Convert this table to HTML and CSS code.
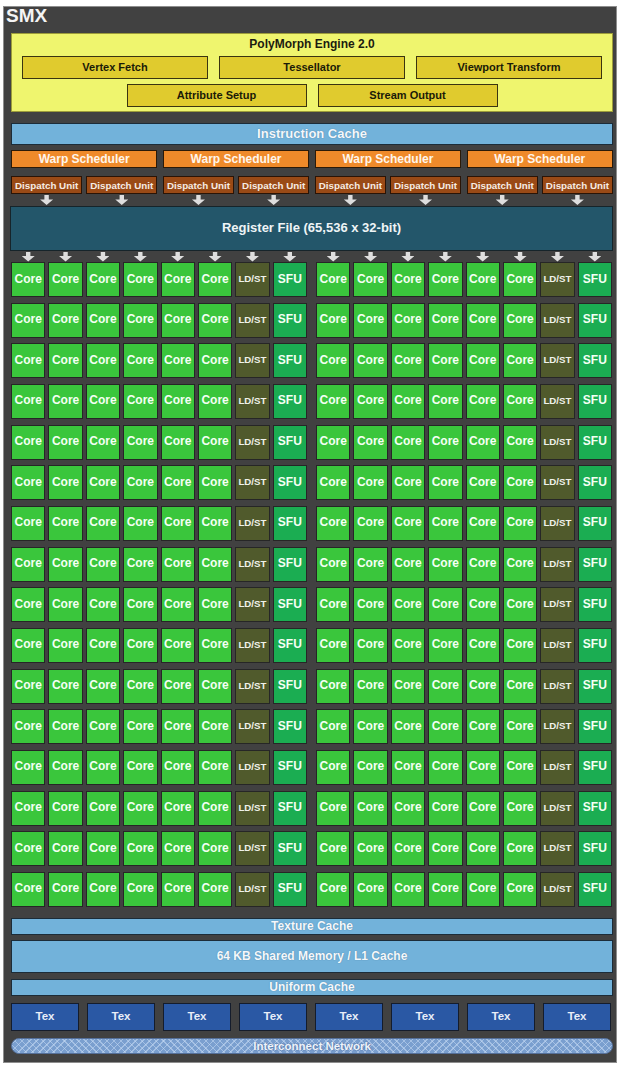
FILE: index.html
```html
<!DOCTYPE html>
<html lang="en">
<head>
<meta charset="utf-8">
<title>SMX</title>
<link rel="stylesheet" href="styles.css">
</head>
<body>
<div class="smx">
  <div class="title">SMX</div>

  <div class="poly">
    <div class="poly-title">PolyMorph Engine 2.0</div>
    <div class="poly-row3">
      <div class="ybox">Vertex Fetch</div>
      <div class="ybox">Tessellator</div>
      <div class="ybox">Viewport Transform</div>
    </div>
    <div class="poly-row2">
      <div class="ybox">Attribute Setup</div>
      <div class="ybox">Stream Output</div>
    </div>
  </div>

  <div class="cache icache">Instruction Cache</div>

  <div class="warps">
    <div class="warp">Warp Scheduler</div>
    <div class="warp">Warp Scheduler</div>
    <div class="warp">Warp Scheduler</div>
    <div class="warp">Warp Scheduler</div>
  </div>

  <div class="dispatches">
    <div class="dgroup"><div class="disp">Dispatch Unit</div><div class="disp">Dispatch Unit</div></div>
    <div class="dgroup"><div class="disp">Dispatch Unit</div><div class="disp">Dispatch Unit</div></div>
    <div class="dgroup"><div class="disp">Dispatch Unit</div><div class="disp">Dispatch Unit</div></div>
    <div class="dgroup"><div class="disp">Dispatch Unit</div><div class="disp">Dispatch Unit</div></div>
  </div>

  <div class="darrows">
    <div class="dgroup"><div class="aslot"><div class="arrow"></div></div><div class="aslot"><div class="arrow"></div></div></div>
    <div class="dgroup"><div class="aslot"><div class="arrow"></div></div><div class="aslot"><div class="arrow"></div></div></div>
    <div class="dgroup"><div class="aslot"><div class="arrow"></div></div><div class="aslot"><div class="arrow"></div></div></div>
    <div class="dgroup"><div class="aslot"><div class="arrow"></div></div><div class="aslot"><div class="arrow"></div></div></div>
  </div>

  <div class="regfile">Register File (65,536 x 32-bit)</div>

  <div class="rarrows">
    <div class="half8">
      <div class="aslot"><div class="arrow"></div></div><div class="aslot"><div class="arrow"></div></div><div class="aslot"><div class="arrow"></div></div><div class="aslot"><div class="arrow"></div></div>
      <div class="aslot"><div class="arrow"></div></div><div class="aslot"><div class="arrow"></div></div><div class="aslot"><div class="arrow"></div></div><div class="aslot"><div class="arrow"></div></div>
    </div>
    <div class="half8">
      <div class="aslot"><div class="arrow"></div></div><div class="aslot"><div class="arrow"></div></div><div class="aslot"><div class="arrow"></div></div><div class="aslot"><div class="arrow"></div></div>
      <div class="aslot"><div class="arrow"></div></div><div class="aslot"><div class="arrow"></div></div><div class="aslot"><div class="arrow"></div></div><div class="aslot"><div class="arrow"></div></div>
    </div>
  </div>

  <div class="cores">
    <div class="half8 grid">
      <div class="core">Core</div><div class="core">Core</div><div class="core">Core</div><div class="core">Core</div><div class="core">Core</div><div class="core">Core</div><div class="ldst">LD/ST</div><div class="sfu">SFU</div>
      <div class="core">Core</div><div class="core">Core</div><div class="core">Core</div><div class="core">Core</div><div class="core">Core</div><div class="core">Core</div><div class="ldst">LD/ST</div><div class="sfu">SFU</div>
      <div class="core">Core</div><div class="core">Core</div><div class="core">Core</div><div class="core">Core</div><div class="core">Core</div><div class="core">Core</div><div class="ldst">LD/ST</div><div class="sfu">SFU</div>
      <div class="core">Core</div><div class="core">Core</div><div class="core">Core</div><div class="core">Core</div><div class="core">Core</div><div class="core">Core</div><div class="ldst">LD/ST</div><div class="sfu">SFU</div>
      <div class="core">Core</div><div class="core">Core</div><div class="core">Core</div><div class="core">Core</div><div class="core">Core</div><div class="core">Core</div><div class="ldst">LD/ST</div><div class="sfu">SFU</div>
      <div class="core">Core</div><div class="core">Core</div><div class="core">Core</div><div class="core">Core</div><div class="core">Core</div><div class="core">Core</div><div class="ldst">LD/ST</div><div class="sfu">SFU</div>
      <div class="core">Core</div><div class="core">Core</div><div class="core">Core</div><div class="core">Core</div><div class="core">Core</div><div class="core">Core</div><div class="ldst">LD/ST</div><div class="sfu">SFU</div>
      <div class="core">Core</div><div class="core">Core</div><div class="core">Core</div><div class="core">Core</div><div class="core">Core</div><div class="core">Core</div><div class="ldst">LD/ST</div><div class="sfu">SFU</div>
      <div class="core">Core</div><div class="core">Core</div><div class="core">Core</div><div class="core">Core</div><div class="core">Core</div><div class="core">Core</div><div class="ldst">LD/ST</div><div class="sfu">SFU</div>
      <div class="core">Core</div><div class="core">Core</div><div class="core">Core</div><div class="core">Core</div><div class="core">Core</div><div class="core">Core</div><div class="ldst">LD/ST</div><div class="sfu">SFU</div>
      <div class="core">Core</div><div class="core">Core</div><div class="core">Core</div><div class="core">Core</div><div class="core">Core</div><div class="core">Core</div><div class="ldst">LD/ST</div><div class="sfu">SFU</div>
      <div class="core">Core</div><div class="core">Core</div><div class="core">Core</div><div class="core">Core</div><div class="core">Core</div><div class="core">Core</div><div class="ldst">LD/ST</div><div class="sfu">SFU</div>
      <div class="core">Core</div><div class="core">Core</div><div class="core">Core</div><div class="core">Core</div><div class="core">Core</div><div class="core">Core</div><div class="ldst">LD/ST</div><div class="sfu">SFU</div>
      <div class="core">Core</div><div class="core">Core</div><div class="core">Core</div><div class="core">Core</div><div class="core">Core</div><div class="core">Core</div><div class="ldst">LD/ST</div><div class="sfu">SFU</div>
      <div class="core">Core</div><div class="core">Core</div><div class="core">Core</div><div class="core">Core</div><div class="core">Core</div><div class="core">Core</div><div class="ldst">LD/ST</div><div class="sfu">SFU</div>
      <div class="core">Core</div><div class="core">Core</div><div class="core">Core</div><div class="core">Core</div><div class="core">Core</div><div class="core">Core</div><div class="ldst">LD/ST</div><div class="sfu">SFU</div>
    </div>
    <div class="half8 grid">
      <div class="core">Core</div><div class="core">Core</div><div class="core">Core</div><div class="core">Core</div><div class="core">Core</div><div class="core">Core</div><div class="ldst">LD/ST</div><div class="sfu">SFU</div>
      <div class="core">Core</div><div class="core">Core</div><div class="core">Core</div><div class="core">Core</div><div class="core">Core</div><div class="core">Core</div><div class="ldst">LD/ST</div><div class="sfu">SFU</div>
      <div class="core">Core</div><div class="core">Core</div><div class="core">Core</div><div class="core">Core</div><div class="core">Core</div><div class="core">Core</div><div class="ldst">LD/ST</div><div class="sfu">SFU</div>
      <div class="core">Core</div><div class="core">Core</div><div class="core">Core</div><div class="core">Core</div><div class="core">Core</div><div class="core">Core</div><div class="ldst">LD/ST</div><div class="sfu">SFU</div>
      <div class="core">Core</div><div class="core">Core</div><div class="core">Core</div><div class="core">Core</div><div class="core">Core</div><div class="core">Core</div><div class="ldst">LD/ST</div><div class="sfu">SFU</div>
      <div class="core">Core</div><div class="core">Core</div><div class="core">Core</div><div class="core">Core</div><div class="core">Core</div><div class="core">Core</div><div class="ldst">LD/ST</div><div class="sfu">SFU</div>
      <div class="core">Core</div><div class="core">Core</div><div class="core">Core</div><div class="core">Core</div><div class="core">Core</div><div class="core">Core</div><div class="ldst">LD/ST</div><div class="sfu">SFU</div>
      <div class="core">Core</div><div class="core">Core</div><div class="core">Core</div><div class="core">Core</div><div class="core">Core</div><div class="core">Core</div><div class="ldst">LD/ST</div><div class="sfu">SFU</div>
      <div class="core">Core</div><div class="core">Core</div><div class="core">Core</div><div class="core">Core</div><div class="core">Core</div><div class="core">Core</div><div class="ldst">LD/ST</div><div class="sfu">SFU</div>
      <div class="core">Core</div><div class="core">Core</div><div class="core">Core</div><div class="core">Core</div><div class="core">Core</div><div class="core">Core</div><div class="ldst">LD/ST</div><div class="sfu">SFU</div>
      <div class="core">Core</div><div class="core">Core</div><div class="core">Core</div><div class="core">Core</div><div class="core">Core</div><div class="core">Core</div><div class="ldst">LD/ST</div><div class="sfu">SFU</div>
      <div class="core">Core</div><div class="core">Core</div><div class="core">Core</div><div class="core">Core</div><div class="core">Core</div><div class="core">Core</div><div class="ldst">LD/ST</div><div class="sfu">SFU</div>
      <div class="core">Core</div><div class="core">Core</div><div class="core">Core</div><div class="core">Core</div><div class="core">Core</div><div class="core">Core</div><div class="ldst">LD/ST</div><div class="sfu">SFU</div>
      <div class="core">Core</div><div class="core">Core</div><div class="core">Core</div><div class="core">Core</div><div class="core">Core</div><div class="core">Core</div><div class="ldst">LD/ST</div><div class="sfu">SFU</div>
      <div class="core">Core</div><div class="core">Core</div><div class="core">Core</div><div class="core">Core</div><div class="core">Core</div><div class="core">Core</div><div class="ldst">LD/ST</div><div class="sfu">SFU</div>
      <div class="core">Core</div><div class="core">Core</div><div class="core">Core</div><div class="core">Core</div><div class="core">Core</div><div class="core">Core</div><div class="ldst">LD/ST</div><div class="sfu">SFU</div>
    </div>
  </div>

  <div class="cache tcache">Texture Cache</div>
  <div class="cache shared">64 KB Shared Memory / L1 Cache</div>
  <div class="cache ucache">Uniform Cache</div>

  <div class="texrow">
    <div class="tex">Tex</div><div class="tex">Tex</div><div class="tex">Tex</div><div class="tex">Tex</div>
    <div class="tex">Tex</div><div class="tex">Tex</div><div class="tex">Tex</div><div class="tex">Tex</div>
  </div>

  <div class="interconnect">Interconnect Network</div>
</div>
</body>
</html>
```

FILE: styles.css
```css
* { box-sizing: border-box; }

html, body {
  margin: 0;
  padding: 0;
  background: #ffffff;
}

body {
  font-family: "Liberation Sans", Arial, sans-serif;
  font-weight: bold;
}

.smx {
  margin: 6px 0 0 3px;
  width: 614px;
  height: 1057px;
  background: #414141;
  border: 1px solid #8e8e8e;
  padding: 0 3px 0 7px;
  display: flex;
  flex-direction: column;
}

.title {
  margin-left: -5px;
  height: 18px;
  line-height: 18px;
  font-size: 19px;
  color: #f4f4f4;
  margin-bottom: 8px;
}

/* PolyMorph engine */
.poly {
  height: 79px;
  background: #eff56e;
  border: 1px solid #9c9c3a;
  padding: 0 10px;
  display: flex;
  flex-direction: column;
}

.poly-title {
  height: 22px;
  line-height: 20px;
  text-align: center;
  font-size: 12px;
  color: #1c1c10;
}

.poly-row3 {
  display: grid;
  grid-template-columns: repeat(3, 1fr);
  gap: 11px;
  height: 23px;
}

.poly-row2 {
  display: grid;
  grid-template-columns: 180px 180px;
  justify-content: center;
  gap: 11px;
  height: 23px;
  margin-top: 5px;
}

.ybox {
  background: #e0cb2e;
  border: 1px solid #3a3410;
  font-size: 11px;
  color: #1a1a08;
  display: flex;
  align-items: center;
  justify-content: center;
  padding-bottom: 2px;
}

/* caches */
.cache {
  background: #72b2da;
  border: 1px solid #1c2c38;
  color: #f4f8fc;
  display: flex;
  align-items: center;
  justify-content: center;
  text-shadow: 0 0 1px rgba(30, 60, 90, 0.5);
}

.icache {
  margin-top: 11px;
  height: 22px;
  font-size: 13px;
  padding-bottom: 2px;
}

.tcache {
  margin-top: 11px;
  height: 17px;
  font-size: 12px;
}

.shared {
  margin-top: 5px;
  height: 33px;
  font-size: 12px;
}

.ucache {
  margin-top: 6px;
  height: 17px;
  font-size: 12px;
}

/* warp schedulers */
.warps {
  margin-top: 5px;
  display: grid;
  grid-template-columns: repeat(4, 1fr);
  gap: 5.5px;
  height: 18px;
}

.warp {
  background: #ef8a2a;
  border: 1px solid #2c1a08;
  color: #fff6ec;
  font-size: 12px;
  display: flex;
  align-items: center;
  justify-content: center;
}

/* dispatch units */
.dispatches,
.darrows {
  display: grid;
  grid-template-columns: repeat(4, 1fr);
  gap: 5.5px;
}

.dispatches {
  margin-top: 8px;
  height: 18px;
}

.dgroup {
  display: grid;
  grid-template-columns: 1fr 1fr;
  gap: 4px;
}

.disp {
  background: #9a4a16;
  border: 1px solid #2a1406;
  color: #f6ece4;
  font-size: 9.8px;
  display: flex;
  align-items: center;
  justify-content: center;
  white-space: nowrap;
}

.darrows {
  height: 12px;
}

.aslot {
  display: flex;
  align-items: center;
  justify-content: center;
}

.arrow {
  width: 13px;
  height: 10px;
  background: #dedede;
  clip-path: polygon(33% 0, 67% 0, 67% 45%, 100% 45%, 50% 100%, 0 45%, 33% 45%);
}

/* register file */
.regfile {
  height: 45px;
  margin-left: -1px;
  background: #23566a;
  border: 1px solid #16242a;
  color: #eef4f6;
  font-size: 13px;
  display: flex;
  align-items: center;
  justify-content: center;
  padding-bottom: 2px;
}

.rarrows {
  height: 11px;
  display: grid;
  grid-template-columns: 296px 296px;
  gap: 9px;
}

.half8 {
  display: grid;
  grid-template-columns: repeat(8, 1fr);
  column-gap: 3px;
}

/* core grid */
.cores {
  display: grid;
  grid-template-columns: 296px 296px;
  gap: 9px;
}

.grid {
  grid-auto-rows: 35px;
  row-gap: 5.67px;
}

.core,
.ldst,
.sfu {
  border: 1px solid #262626;
  color: #f4fff4;
  display: flex;
  align-items: center;
  justify-content: center;
  font-size: 12px;
  white-space: nowrap;
  padding-bottom: 2px;
}

.core { background: #3ac63c; }
.ldst { background: #505a2c; font-size: 9.7px; color: #f0f2ea; }
.sfu  { background: #1bad52; }

/* texture units */
.texrow {
  margin-top: 7px;
  height: 28px;
  display: grid;
  grid-template-columns: repeat(8, 68px);
  gap: 8px;
}

.tex {
  background: #2a58a4;
  border: 1px solid #141c2c;
  color: #e8eef8;
  font-size: 11.5px;
  display: flex;
  align-items: center;
  justify-content: center;
  padding-bottom: 2px;
}

/* interconnect */
.interconnect {
  margin-top: 7px;
  height: 16px;
  border-radius: 8px;
  border: 1px solid #55709a;
  background-color: #7a9fcf;
  background-image:
    repeating-linear-gradient(45deg, rgba(200, 220, 245, 0.55) 0 1px, transparent 1px 5px),
    repeating-linear-gradient(-45deg, rgba(200, 220, 245, 0.55) 0 1px, transparent 1px 5px);
  color: #eef3fb;
  font-size: 11.5px;
  display: flex;
  align-items: center;
  justify-content: center;
  text-shadow: 0 0 2px rgba(40, 70, 120, 0.8);
}
```
